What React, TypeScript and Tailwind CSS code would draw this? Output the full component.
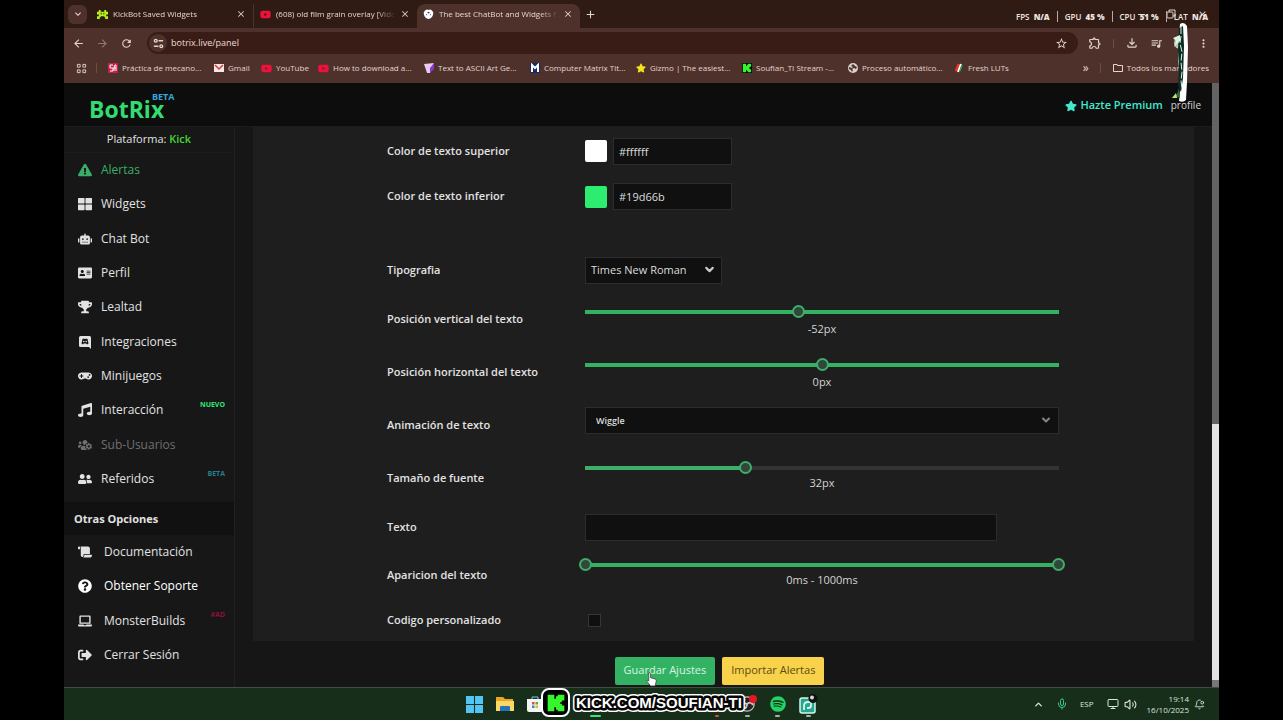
import React, { useState } from "react";
import type { ReactNode } from "react";
import {
  FaAddressCard, FaExclamationTriangle, FaGamepad, FaLaptop, FaMusic, FaQuestionCircle, FaRobot,
  FaScroll, FaSignOutAlt, FaSpotify, FaStar, FaThLarge, FaTrophy, FaUserFriends, FaUsersCog, FaYoutube,
} from "react-icons/fa";
import {
  MdAdd, MdArrowBack, MdArrowForward, MdClose, MdKeyboardArrowDown, MdMoreVert, MdOutlineExtension,
  MdOutlineFileDownload, MdOutlineFolder, MdOutlineStarBorder, MdQueueMusic, MdRefresh, MdTune,
} from "react-icons/md";
import { BellDot, ChevronDown, ChevronUp, Mic, Monitor, Volume2 } from "lucide-react";

const slider =
  "block h-[13px] w-full cursor-pointer appearance-none bg-transparent bg-center bg-no-repeat [background-size:100%_4px] outline-none [&::-webkit-slider-thumb]:h-[13px] [&::-webkit-slider-thumb]:w-[13px] [&::-webkit-slider-thumb]:appearance-none [&::-webkit-slider-thumb]:rounded-full [&::-webkit-slider-thumb]:border-2 [&::-webkit-slider-thumb]:border-[#3fae6b] [&::-webkit-slider-thumb]:bg-[#30473a]";
const field = "h-[27px] border border-[#2c2c2c] bg-[#101010] text-[#dcdcdc] outline-none";

function KickMark({ className }: { className: string }) {
  return (
    <svg viewBox="0 0 12 12" className={className} aria-hidden="true">
      <path fill="currentColor" d="M1 1h4v2.500h1V2h1V1h4v3.500H9.500V5.500H8.500v1h1v1H11V11H7v-1H6V8.500H5V11H1z" />
    </svg>
  );
}

function KickTile() {
  return (
    <span className="flex h-[10px] w-[10px] items-center justify-center bg-black text-[#35f52b]">
      <KickMark className="h-[10px] w-[10px]" />
    </span>
  );
}

function RobotMark() {
  return (
    <svg viewBox="0 0 12 12" className="h-[11px] w-[11px]" aria-hidden="true">
      <path fill="#b6f21c" d="M2 1h2v2h4V1h2v2h2v3h-2v2h2v3H9V9H8V8H4v1H3v2H0V8h2V6H0V3h2z" />
      <path fill="#2f1a12" d="M4 4h1v2H4zM7 4h1v2H7z" />
    </svg>
  );
}

function DiceMark() {
  return (
    <svg viewBox="0 0 12 12" className="h-[11px] w-[11px]" aria-hidden="true">
      <path fill="#2d3a5e" d="M1 1h10v6l-5 5-5-5z" />
      <path fill="#fff" d="M6 1q2-1 4 1 2 2 1 4-1 4-5 5Q2 10 1 6q-1-2 1-4 2-2 4-1z" />
      <path fill="#28314d" d="m6 3 1.500 1L6 5 4.500 4zM3.500 5.500l1 .5v1l-1-.5zM8.500 5.500v1l-1 .5V6z" />
    </svg>
  );
}

function DiscordMark() {
  return (
    <svg viewBox="0 0 14 14" className="h-[14px] w-[14px]" aria-hidden="true">
      <path fill="currentColor" fillRule="evenodd" d="M2.500 1h9Q13 1 13 2.500V14l-2-2H2.500Q1 12 1 10.500v-8Q1 1 2.500 1zM4.500 4 3.500 8.500 5 9.500l.7-1h2.600l.7 1 1.500-1-1-4.500-1.500-.5-.5.600h-1L6 3.500z" />
      <circle cx="5.800" cy="6.500" r=".8" fill="currentColor" />
      <circle cx="8.200" cy="6.500" r=".8" fill="currentColor" />
    </svg>
  );
}

type Tab = { title: string; icon: ReactNode; active?: boolean };
const tabs: Tab[] = [
  { title: "KickBot Saved Widgets", icon: <RobotMark /> },
  { title: "(608) old film grain overlay [Vide", icon: <FaYoutube className="h-[11px] w-[11px] text-[#f0103c]" /> },
  { title: "The best ChatBot and Widgets f", icon: <DiceMark />, active: true },
];

const yt = <FaYoutube className="h-[11px] w-[11px] text-[#f0103c]" />;
const bookmarks: { title: string; icon: ReactNode; width: string }[] = [
  {
    title: "Práctica de mecano...", width: "w-[106px]",
    icon: (
      <svg viewBox="0 0 10 10" className="h-[10px] w-[10px]"><rect width="10" height="10" fill="#c41f4c" /><path d="M5 2H2v3h3v3H2M6 8V4l1-2h1v6M6 5h2" fill="none" stroke="#fff" /></svg>
    ),
  },
  {
    title: "Gmail", width: "w-[47px]",
    icon: (
      <svg viewBox="0 0 10 10" className="h-[10px] w-[10px]"><path fill="#f5e9e6" d="M0 1h10v8H0z" /><path d="m1 2 4 4 4-4" fill="none" stroke="#d63c34" strokeWidth="1.500" /></svg>
    ),
  },
  { title: "YouTube", width: "w-[57px]", icon: yt },
  { title: "How to download a...", width: "w-[106px]", icon: yt },
  {
    title: "Text to ASCII Art Ge...", width: "w-[106px]",
    icon: (
      <svg viewBox="0 0 10 10" className="h-[10px] w-[10px]"><path fill="#e8c9ef" d="m0 1 10-1-4 10H3z" /><path fill="#8b35c9" d="m6 5 4-5v6L6 10z" /></svg>
    ),
  },
  {
    title: "Computer Matrix Tit...", width: "w-[106px]",
    icon: (
      <svg viewBox="0 0 10 10" className="h-[10px] w-[10px]"><path fill="#172a66" d="M0 0h10v10H0z" /><path d="M2 9V2l3 3 3-3v7" fill="none" stroke="#fff" strokeWidth="2" /></svg>
    ),
  },
  { title: "Gizmo | The easiest...", width: "w-[106px]", icon: <FaStar className="h-[10px] w-[10px] text-[#f2e51b]" /> },
  { title: "Soufian_TI Stream -...", width: "w-[106px]", icon: <KickTile /> },
  {
    title: "Proceso automático...", width: "w-[106px]",
    icon: (
      <svg viewBox="0 0 10 10" className="h-[10px] w-[10px]"><circle cx="5" cy="5" r="5" fill="#d9cfcc" /><path fill="#4e312b" d="M5 1 3 3l2 1-1 1-3-1v2l2 1 1 2 1-2-1-1 2-1 2 1 1-2-2-1z" /></svg>
    ),
  },
  {
    title: "Fresh LUTs", width: "w-[60px]",
    icon: (
      <svg viewBox="0 0 10 10" className="h-[10px] w-[10px]"><path d="M2 8 5 1" stroke="#e5352d" strokeWidth="3" /><path d="M4 9 7 1" stroke="#fff" strokeWidth="2" /><path d="m6 8 2-6" stroke="#28a15f" strokeWidth="1.500" /></svg>
    ),
  },
];

type NavItem = { label: string; icon: ReactNode; badge?: string; badgeColor?: string; color?: string };
const mainNav: NavItem[] = [
  { label: "Alertas", icon: <FaExclamationTriangle />, color: "text-[#3aae68]" },
  { label: "Widgets", icon: <FaThLarge /> },
  { label: "Chat Bot", icon: <FaRobot /> },
  { label: "Perfil", icon: <FaAddressCard /> },
  { label: "Lealtad", icon: <FaTrophy /> },
  { label: "Integraciones", icon: <DiscordMark /> },
  { label: "Minijuegos", icon: <FaGamepad /> },
  { label: "Interacción", icon: <FaMusic />, badge: "NUEVO", badgeColor: "text-[#2ee675]" },
  { label: "Sub-Usuarios", icon: <FaUsersCog />, color: "text-[#6f6f6f]" },
  { label: "Referidos", icon: <FaUserFriends />, badge: "BETA", badgeColor: "text-[#237f8c]" },
];
const otherNav: NavItem[] = [
  { label: "Documentación", icon: <FaScroll /> },
  { label: "Obtener Soporte", icon: <FaQuestionCircle />, color: "font-medium text-white" },
  { label: "MonsterBuilds", icon: <FaLaptop />, badge: "#AD", badgeColor: "text-[#8c1238]" },
  { label: "Cerrar Sesión", icon: <FaSignOutAlt /> },
];

function NavList({ items, gap }: { items: NavItem[]; gap: string }) {
  return (
    <>
      {items.map((item) => (
        <a key={item.label} href="#" className={`flex flex-1 items-center pr-[9px] pl-[14px] text-[12px] ${gap} ${item.color ?? "text-[#e2e2e2]"}`}>
          <span className="flex w-[14px] shrink-0 justify-center text-[14px]">{item.icon}</span>
          <span className="flex-1 whitespace-nowrap">{item.label}</span>
          {item.badge && <span className={`pb-[10px] text-[7px] font-bold ${item.badgeColor}`}>{item.badge}</span>}
        </a>
      ))}
    </>
  );
}

function BrowserChrome() {
  return (
    <header className="relative bg-[#4e312b] text-[#e3d4cf]">
      <div className="flex h-[28px] items-end bg-[#2f1b13]">
        <div className="flex h-full items-center pr-[4px] pl-[4px]">
          <button aria-label="Buscar pestañas" className="flex h-[19px] w-[19px] items-center justify-center rounded-md bg-[#4e312b]">
            <MdKeyboardArrowDown className="h-[12px] w-[12px]" />
          </button>
        </div>
        {tabs.map((tab, i) => (
          <div
            key={tab.title}
            className={`flex h-[24px] w-[163px] items-center gap-[5px] pr-[7px] pl-[6px] pb-[4px] text-[8px] ${tab.active ? "rounded-t-lg bg-[#4e312b]" : ""} ${i === 0 ? "border-r border-[#4e312b]" : ""}`}
          >
            <span className="shrink-0">{tab.icon}</span>
            <span className="flex-1 overflow-hidden whitespace-nowrap [mask-image:linear-gradient(to_right,black_85%,transparent)]">{tab.title}</span>
            <button aria-label="Cerrar pestaña"><MdClose className="h-[10px] w-[10px]" /></button>
          </div>
        ))}
        <button aria-label="Nueva pestaña" className="flex h-full items-center pl-[4px]"><MdAdd className="h-[13px] w-[13px]" /></button>
        <div className="flex h-full flex-1 items-center justify-end gap-[21px] pr-[11px]">
          <button aria-label="Minimizar" className="h-px w-[7px] bg-[#e3d4cf]" />
          <button aria-label="Restaurar">
            <svg viewBox="0 0 10 10" className="h-[10px] w-[10px]" fill="none" stroke="currentColor"><rect x="1" y="3" width="6" height="6" rx="1" /><path d="M3 3V1h6v6H7" /></svg>
          </button>
          <button aria-label="Cerrar"><MdClose className="h-[11px] w-[11px]" /></button>
        </div>
      </div>

      <div className="flex h-[30px] items-center pr-[9px] pl-[8px]">
        <div className="flex w-[75px] items-center gap-[11px]">
          <button aria-label="Atrás"><MdArrowBack className="h-[13px] w-[13px]" /></button>
          <button aria-label="Adelante"><MdArrowForward className="h-[13px] w-[13px] text-[#93766f]" /></button>
          <button aria-label="Recargar"><MdRefresh className="h-[13px] w-[13px]" /></button>
        </div>
        <div className="flex h-[22px] flex-1 items-center rounded-full bg-[#3a1c17] pr-[10px] pl-[2px]">
          <span className="flex h-[18px] w-[18px] items-center justify-center rounded-full bg-[#4e312b]">
            <svg viewBox="0 0 12 12" className="h-[11px] w-[11px]" fill="none" stroke="currentColor" strokeWidth="1.500" aria-hidden="true"><circle cx="3" cy="3" r="1.500" /><path d="M6 3h5M1 9h5" /><circle cx="9" cy="9" r="1.500" /></svg>
          </span>
          <input aria-label="Dirección" defaultValue="botrix.live/panel" className="ml-[4px] min-w-0 flex-1 bg-transparent text-[9px] text-[#eaded9] outline-none" />
          <button aria-label="Favorito"><MdOutlineStarBorder className="h-[13px] w-[13px]" /></button>
        </div>
        <div className="ml-[10px] flex w-[122px] items-center justify-between">
          <MdOutlineExtension className="h-[14px] w-[14px]" />
          <span className="h-[9px] w-px bg-[#6d4c45]" />
          <MdOutlineFileDownload className="h-[14px] w-[14px]" />
          <MdQueueMusic className="h-[13px] w-[13px]" />
          <span className="h-[12px] w-[12px] rounded-full bg-[#b9c2b4]" />
          <MdMoreVert className="h-[13px] w-[13px]" />
        </div>
      </div>

      <nav aria-label="Marcadores" className="flex h-[25px] items-center pr-[10px] pb-[5px] pl-[12px] text-[8px]">
        <svg viewBox="0 0 12 12" className="h-[11px] w-[11px]" fill="none" stroke="currentColor"><path d="M1.500 1.500h3v3h-3zM7.500 1.500h3v3h-3zM1.500 7.500h3v3h-3zM7.500 7.500h3v3h-3z" /></svg>
        <span className="mr-[11px] ml-[9px] h-[10px] w-px bg-[#6d4c45]" />
        {bookmarks.map((b) => (
          <a key={b.title} href="#" className={`flex shrink-0 items-center gap-[4px] whitespace-nowrap ${b.width}`}>
            <span className="shrink-0">{b.icon}</span>
            {b.title}
          </a>
        ))}
        <span className="ml-auto text-[12px] leading-none">»</span>
        <span className="mx-[11px] h-[10px] w-px bg-[#6d4c45]" />
        <a href="#" className="flex items-center gap-[3px] whitespace-nowrap"><MdOutlineFolder className="h-[12px] w-[12px]" />Todos los marcadores</a>
      </nav>

      {/* Performance counters floating over the window corner */}
      <div className="absolute top-[11px] right-[11px] flex items-center gap-[7px] text-[8px] leading-[11px] font-semibold whitespace-nowrap text-[#eee5e0]">
        <span>FPS &nbsp;<b>N/A</b></span>
        <span className="h-[11px] w-px bg-[#b9aaa4]" />
        <span>GPU &nbsp;<b>45 %</b></span>
        <span className="h-[11px] w-px bg-[#b9aaa4]" />
        <span>CPU &nbsp;<b>51 %</b></span>
        <span className="h-[11px] w-px bg-[#b9aaa4]" />
        <span>LAT &nbsp;<b>N/A</b></span>
      </div>
      <svg viewBox="0 0 20 80" className="absolute top-[22px] right-[28px] z-10 h-[80px] w-[20px]" aria-hidden="true">
        <path fill="#fff" d="M9 2q4-3 7 2l1 21-1 35-1 18q-3 3-7 1l2-20-3-20 1-25z" />
        <path fill="#0c2b22" d="m8 6 4-2 1 20-1 32-2 14-3-6 1-16-1-20z" />
        <path d="M10 5v9l-1 7 2 9-1 10 1 10-1 9 1 7" fill="none" stroke="#d9f7e9" strokeWidth="1" strokeDasharray="7 2" />
        <path fill="#daf5df" d="m2 16 7-3v6l-6 6 2-6z" />
        <path fill="#2d6b41" d="m8 66-2 6-6 4 5-1 4 1z" />
        <path fill="#b8e66d" d="m5 71-4 5h5z" />
      </svg>
    </header>
  );
}

function Row({ label, id, height, children }: { label: string; id: string; height: string; children: ReactNode }) {
  return (
    <div className={`grid grid-cols-[198px_minmax(0,1fr)] items-center ${height}`}>
      <label htmlFor={id} className="text-[11px] font-semibold text-[#e2e2e2]">{label}</label>
      {children}
    </div>
  );
}

function ColorRow({ label, id, value, swatch, height }: { label: string; id: string; value: string; swatch: string; height: string }) {
  return (
    <Row label={label} id={id} height={height}>
      <div className="flex items-center gap-[6px]">
        <button type="button" aria-label={`Elegir ${label}`} className={`h-[22px] w-[22px] rounded-xs ${swatch}`} />
        <input id={id} defaultValue={value} className={`w-[119px] px-[5px] text-[11px] ${field}`} />
      </div>
    </Row>
  );
}

function Settings() {
  const [vertical, setVertical] = useState(-52);
  const [horizontal, setHorizontal] = useState(0);
  const [size, setSize] = useState(32);
  const [start, setStart] = useState(0);
  const [end, setEnd] = useState(1000);
  const green = "bg-[linear-gradient(#34b263,#34b263)]";
  const value = "text-center text-[11px] leading-[16px] text-[#d4d4d4]";
  return (
    <form className="mx-[18px] bg-[#1e1e1e] pt-px pr-[135px] pl-[134px]">
      <ColorRow label="Color de texto superior" id="top-color" value="#ffffff" swatch="bg-white" height="h-[46px]" />
      <ColorRow label="Color de texto inferior" id="bottom-color" value="#19d66b" swatch="bg-[#2ced70]" height="h-[45px]" />
      <div className="pt-[28px]">
        <Row label="Tipografia" id="font" height="h-[46px]">
          <div className="relative w-[137px]">
            <select id="font" className={`w-full appearance-none px-[5px] text-[11px] ${field}`}><option>Times New Roman</option></select>
            <ChevronDown className="pointer-events-none absolute top-[7px] right-[6px] h-[13px] w-[13px] text-[#c7c7c7]" strokeWidth={4} />
          </div>
        </Row>
      </div>
      <Row label="Posición vertical del texto" id="pos-y" height="h-[53px]">
        <div className="self-start pt-[12px]">
          <input id="pos-y" type="range" min={-500} max={500} value={vertical} onChange={(e) => setVertical(+e.target.value)} className={`${slider} ${green}`} />
          <div className={`mt-[3px] ${value}`}>{vertical}px</div>
        </div>
      </Row>
      <Row label="Posición horizontal del texto" id="pos-x" height="h-[53px]">
        <div className="self-start pt-[12px]">
          <input id="pos-x" type="range" min={-500} max={500} value={horizontal} onChange={(e) => setHorizontal(+e.target.value)} className={`${slider} ${green}`} />
          <div className={`mt-[3px] ${value}`}>{horizontal}px</div>
        </div>
      </Row>
      <Row label="Animación de texto" id="animation" height="h-[53px]">
        <div className="relative self-start pt-[7px]">
          <select id="animation" className={`w-full appearance-none px-[10px] text-[9px] font-semibold ${field}`}><option>Wiggle</option></select>
          <ChevronDown className="pointer-events-none absolute top-[15px] right-[7px] h-[12px] w-[12px] text-[#858585]" strokeWidth={4} />
        </div>
      </Row>
      <Row label="Tamaño de fuente" id="size" height="h-[53px]">
        <div className="self-start pt-[9px]">
          <input
            id="size" type="range" min={0} max={96} value={size} onChange={(e) => setSize(+e.target.value)} className={slider}
            style={{ backgroundImage: `linear-gradient(to right, #3eae6a ${(size / 96) * 100}%, #333333 ${(size / 96) * 100}%)` }}
          />
          <div className={`mt-[1px] ${value}`}>{size}px</div>
        </div>
      </Row>
      <Row label="Texto" id="text" height="h-[45px]">
        <input id="text" className={`w-[87%] px-[5px] text-[11px] ${field}`} />
      </Row>
      <Row label="Aparicion del texto" id="start" height="h-[50px]">
        <div className="self-start pt-[8px]">
          <div className="-mx-[6px] grid">
            <input id="start" type="range" min={0} max={1000} value={start} onChange={(e) => setStart(Math.min(+e.target.value, end))} className={`col-start-1 row-start-1 [background-size:calc(100%-12px)_4px]! ${slider} ${green}`} />
            <input aria-label="Fin del texto" type="range" min={0} max={1000} value={end} onChange={(e) => setEnd(Math.max(+e.target.value, start))} className={`pointer-events-none col-start-1 row-start-1 [&::-webkit-slider-thumb]:pointer-events-auto ${slider}`} />
          </div>
          <div className={`mt-[1px] ${value}`}>{start}ms - {end}ms</div>
        </div>
      </Row>
      <Row label="Codigo personalizado" id="custom" height="h-[41px]">
        <input id="custom" type="checkbox" className="ml-[3px] h-[13px] w-[13px] appearance-none border border-[#363636] bg-[#101010] checked:bg-[#34b263]" />
      </Row>
    </form>
  );
}

function Panel() {
  return (
    <main className="flex flex-1 bg-[#161616] text-[#e2e2e2]">
      <div className="flex min-w-0 flex-1 flex-col">
        <div className="flex h-[44px] items-center justify-between border-b border-[#1c1c1c] bg-[#0d0d0d] pt-[2px] pr-[11px] pl-[25px]">
          <div className="relative pt-[6px] text-[23px] leading-[28px] font-bold text-[#32dc70]">
            BotRix
            <span className="absolute top-[2px] left-[63px] text-[9px] leading-[12px] text-[#35a8db]">BETA</span>
          </div>
          <div className="flex items-center gap-[8px] text-[11px]">
            <a href="#" className="flex items-center gap-[3px] font-semibold text-[#40e8d0]"><FaStar className="h-[12px] w-[12px]" />Hazte Premium</a>
            <a href="#" className="text-[10px] text-[#d4d4d4]">profile</a>
          </div>
        </div>
        <div className="flex flex-1">
          <aside className="flex w-[171px] flex-col border-r border-[#202020] bg-[#171717]">
            <div className="h-[26px] border-b border-[#1b1b1b] text-center text-[11px] leading-[24px]">Plataforma: <b className="font-semibold text-[#45d636]">Kick</b></div>
            <nav aria-label="Principal" className="flex h-[343px] flex-col"><NavList items={mainNav} gap="gap-[9px]" /></nav>
            <h2 className="mt-[6px] h-[33px] bg-[#111111] pl-[10px] text-[11px] leading-[33px] font-bold">Otras Opciones</h2>
            <nav aria-label="Otras opciones" className="flex h-[137px] flex-col"><NavList items={otherNav} gap="gap-[12px]" /></nav>
          </aside>
          <section className="flex min-w-0 flex-1 flex-col">
            <Settings />
            <div className="flex flex-1 items-center justify-center gap-[7px] pt-[13px] pr-[8px] text-[11px]">
              <button className="relative h-[28px] rounded-xs bg-[#34b263] px-[9px] text-[#d8f5e1]">
                Guardar Ajustes
                <svg viewBox="0 0 12 16" className="absolute top-[15px] left-[31px] h-[15px] w-[11px]" aria-hidden="true">
                  <path fill="#fff" stroke="#333" strokeWidth=".8" d="M3 1q1.500-1 2 .5V6l5 1.500q1.500.5 1.200 2L10 15H5L1 10q-.8-1.500 1-1.200l1 1z" />
                </svg>
              </button>
              <button className="h-[28px] rounded-xs bg-[#f8d24a] px-[9px] text-[#5e4a14]">Importar Alertas</button>
            </div>
          </section>
        </div>
      </div>
      <div className="flex w-[7px] flex-col bg-[#636363] pt-[341px]">
        <div className="flex-1 bg-[#e2e2e2]" />
        <div className="h-[7px] bg-[#777777]" />
      </div>
    </main>
  );
}

function Taskbar() {
  const slot = "relative flex flex-1 items-center justify-center";
  const dot = <span className="absolute bottom-[3px] h-[2px] w-[5px] rounded-full bg-[#a3b5a6]" />;
  return (
    <footer className="relative flex h-[33px] items-center justify-center border-t border-[#3e4e3f] bg-[#172e1a] text-[#dbe5dc]">
      <div className="flex h-full w-[364px]">
        <button aria-label="Inicio" className={slot}>
          <svg viewBox="0 0 16 16" className="h-[17px] w-[17px]"><path fill="#52c5f4" d="M0 0h7.500v7.500H0zM8.500 0H16v7.500H8.500zM0 8.500h7.500V16H0zM8.500 8.500H16V16H8.500z" /></svg>
        </button>
        <button aria-label="Explorador" className={slot}>
          <svg viewBox="0 0 18 16" className="h-[16px] w-[18px]"><path fill="#e8a823" d="M0 1h7l2 2h8v4H0z" /><path fill="#fbd768" d="M0 5h18v10H0z" /><path fill="#2573b8" d="M4 15v-4q0-1 1-1h8q1 0 1 1v4z" /></svg>
        </button>
        <button aria-label="Tienda" className={slot}>
          <svg viewBox="0 0 16 16" className="h-[16px] w-[16px]"><path fill="none" stroke="#72c8ee" d="M5 4V1h6v3" /><path fill="#f4f4f4" d="M0 3h16v11q0 2-2 2H2q-2 0-2-2z" /><path fill="#e74a33" d="M5 6h2.500v2.500H5z" /><path fill="#58a83d" d="M8.500 6H11v2.500H8.500z" /><path fill="#2c8bd6" d="M5 9.500h2.500V12H5z" /><path fill="#f1b51c" d="M8.500 9.500H11V12H8.500z" /></svg>
        </button>
        <span className={slot} />
        <span className={slot}><span className="absolute bottom-[3px] h-[2px] w-[11px] rounded-full bg-[#3be07c]" /></span>
        <span className={slot} />
        <span className={slot} />
        <span className={slot} />
        <span className={slot}><span className="absolute bottom-[3px] h-[2px] w-[4px] rounded-full bg-[#d04f4c]" /></span>
        <button aria-label="OBS" className={slot}>
          <svg viewBox="0 0 18 18" className="h-[18px] w-[18px]"><circle cx="8" cy="9" r="7.200" fill="#242226" stroke="#c8c8c8" strokeWidth="1.200" /><path d="M8 9Q3 8 6 4M8 9q4-3 6 1M8 9q0 5-4 4" fill="none" stroke="#c8c8c8" strokeWidth="1.800" /><circle cx="14" cy="4" r="4" fill="#ee1320" /></svg>
          {dot}
        </button>
        <button aria-label="Spotify" className={slot}><FaSpotify className="h-[16px] w-[16px] text-[#24d366]" />{dot}</button>
        <button aria-label="Grabador" className={slot}>
          <svg viewBox="0 0 20 20" className="h-[20px] w-[20px]"><rect x="2" y="4" width="15" height="15" rx="2" fill="#27a58f" stroke="#d3f6ea" strokeWidth="1.500" /><path d="M6 16v-4q0-4 4-4h3v4q0 2-3 2h-1" fill="none" stroke="#d3f6ea" strokeWidth="1.800" /><circle cx="15" cy="4.500" r="4.500" fill="#101010" /><circle cx="14" cy="3.500" r="2" fill="#d8d8d8" /></svg>
          {dot}
        </button>
      </div>
      <div className="absolute inset-y-0 right-[14px] flex items-center text-[8px]">
        <ChevronUp className="mr-[12px] h-[11px] w-[11px]" strokeWidth={3} />
        <Mic className="mr-[12px] h-[12px] w-[12px] text-[#3fc681]" />
        <span className="mr-[13px]">ESP</span>
        <Monitor className="mr-[5px] h-[12px] w-[12px]" />
        <Volume2 className="mr-[10px] h-[13px] w-[13px]" />
        <time className="mr-[5px] text-right leading-[11px]">19:14<br />16/10/2025</time>
        <BellDot className="h-[11px] w-[11px]" />
      </div>
      {/* Streamer's channel banner */}
      <div className="absolute top-0 left-[477px] flex items-center gap-[2px]">
        <span className="flex h-[29px] w-[29px] items-center justify-center rounded-lg border-2 border-white bg-black text-[#35f52b]"><KickMark className="h-[20px] w-[20px]" /></span>
        <svg viewBox="0 0 176 29" className="h-[29px] w-[176px]" role="img" aria-label="KICK.COM/SOUFIAN-TI">
          <g fontFamily="'Liberation Sans',sans-serif" fontSize="15" fontWeight="700" strokeLinejoin="round">
            <text x="4" y="20" fill="#fff" stroke="#fff" strokeWidth="8" aria-hidden="true">KICK.COM/SOUFIAN-TI</text>
            <text x="4" y="20" fill="#fff" stroke="#050505" strokeWidth="5" paintOrder="stroke">KICK.COM/SOUFIAN-TI</text>
          </g>
        </svg>
      </div>
    </footer>
  );
}

export default function App() {
  return (
    <div className="min-h-screen bg-black px-16 font-['Open_Sans','Noto_Sans',sans-serif]">
      <div className="flex min-h-screen flex-col">
        <BrowserChrome />
        <Panel />
        <Taskbar />
      </div>
    </div>
  );
}
